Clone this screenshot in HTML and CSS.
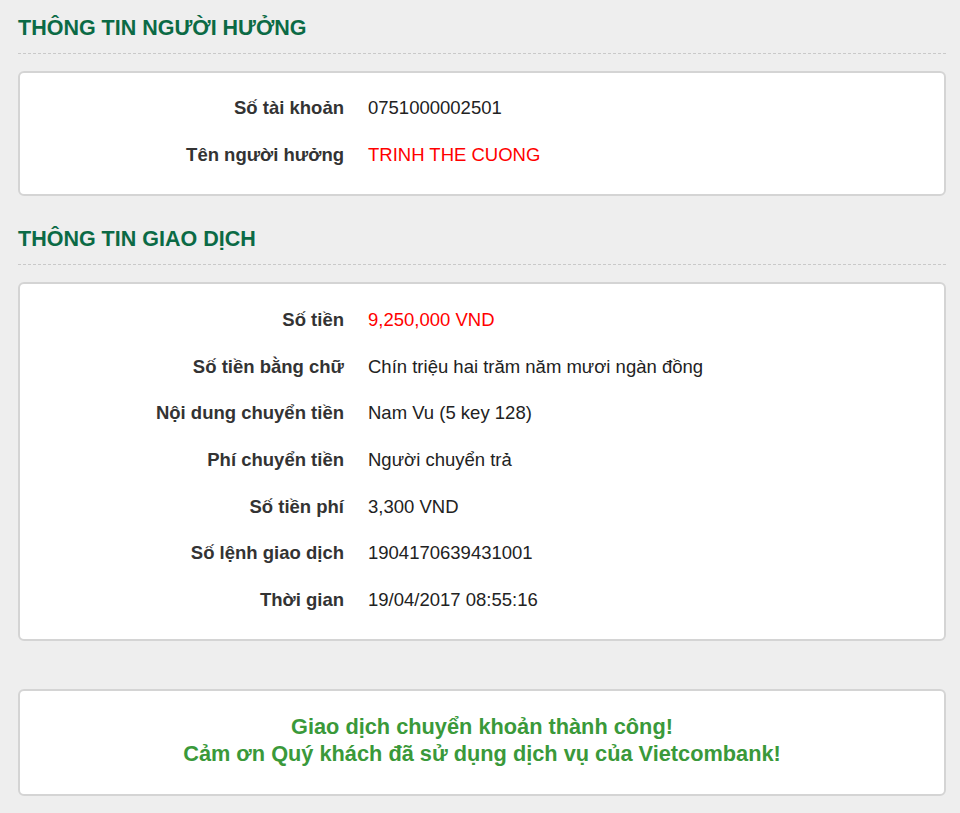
FILE: index.html
```html
<!DOCTYPE html>
<html lang="vi">
<head>
<meta charset="utf-8">
<title>Vietcombank - Kết quả giao dịch</title>
<link rel="stylesheet" href="styles.css">
</head>
<body>
<div class="page">
  <h2 class="section-title first">THÔNG TIN NGƯỜI HƯỞNG</h2>
  <div class="card">
    <div class="row"><div class="label">Số tài khoản</div><div class="value">0751000002501</div></div>
    <div class="row"><div class="label">Tên người hưởng</div><div class="value red">TRINH THE CUONG</div></div>
  </div>

  <h2 class="section-title">THÔNG TIN GIAO DỊCH</h2>
  <div class="card card-tx">
    <div class="row"><div class="label">Số tiền</div><div class="value red">9,250,000 VND</div></div>
    <div class="row"><div class="label">Số tiền bằng chữ</div><div class="value">Chín triệu hai trăm năm mươi ngàn đồng</div></div>
    <div class="row"><div class="label">Nội dung chuyển tiền</div><div class="value">Nam Vu (5 key 128)</div></div>
    <div class="row"><div class="label">Phí chuyển tiền</div><div class="value">Người chuyển trả</div></div>
    <div class="row"><div class="label">Số tiền phí</div><div class="value">3,300 VND</div></div>
    <div class="row"><div class="label">Số lệnh giao dịch</div><div class="value">1904170639431001</div></div>
    <div class="row"><div class="label">Thời gian</div><div class="value">19/04/2017 08:55:16</div></div>
  </div>

  <div class="card card-msg">
    <p class="msg">Giao dịch chuyển khoản thành công!</p>
    <p class="msg">Cảm ơn Quý khách đã sử dụng dịch vụ của Vietcombank!</p>
  </div>
</div>
</body>
</html>
```
FILE: styles.css
```css
html, body {
  margin: 0;
  padding: 0;
  background: #eeeeee;
}

body {
  font-family: "Liberation Sans", Arial, Helvetica, sans-serif;
  color: #222222;
}

.page {
  padding: 0 14px 16px 18px;
}

.section-title {
  margin: 30px 0 0;
  padding: 0 0 12px;
  font-size: 21.5px;
  line-height: 26px;
  font-weight: bold;
  color: #0b6a45;
  border-bottom: 1px dashed #c9c9c9;
}

.section-title.first {
  margin-top: 15px;
}

.card {
  margin-top: 17px;
  background: #ffffff;
  border: 2px solid #d4d4d4;
  border-radius: 6px;
  padding: 12px 0 16px;
}

.card-tx {
  padding-top: 12.5px;
}

.row {
  display: grid;
  grid-template-columns: 324px 1fr;
  column-gap: 24px;
  align-items: center;
  height: 46.67px;
  font-size: 18.5px;
}

.label {
  text-align: right;
  font-weight: bold;
  color: #333333;
}

.value {
  color: #222222;
}

.red {
  color: #ff0000;
}

.card-msg {
  margin-top: 48px;
  padding: 22px 0 27px;
  text-align: center;
}

.msg {
  margin: 0;
  font-size: 21.75px;
  line-height: 27px;
  font-weight: bold;
  color: #3a993a;
}
```
